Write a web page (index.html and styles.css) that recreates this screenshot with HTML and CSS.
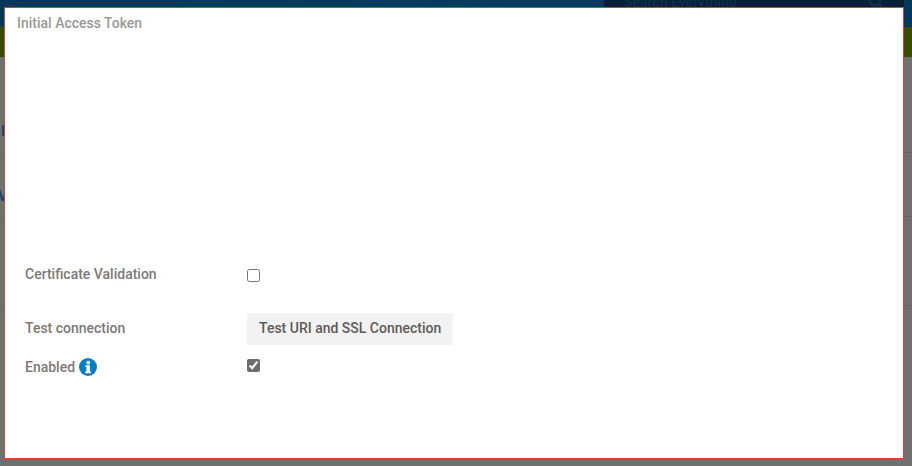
FILE: index.html
```html
<!DOCTYPE html>
<html lang="en">
	<head>
		<meta name="viewport" content="width=device-width, initial-scale=1" />
		<title>Initial Access Token</title>
		<link rel="stylesheet" href="styles.css">
	</head>
	<body>
		<div class="page">
			<header class="topbar">
				<div class="search">
					<span class="search-text">Search Everything</span>
					<svg class="search-icon" width="20" height="20" viewBox="0 0 20 20">
						<circle cx="8" cy="0" r="5.5" fill="none" stroke="#0f2f4c" stroke-width="2.4" />
						<path d="M12 4l4 4" stroke="#0f2f4c" stroke-width="2.6" />
					</svg>
				</div>
			</header>
			<div class="greenbar"></div>
			<div class="backdrop">
				<div class="back-row back-row-one"><span class="back-letter letter-one">I</span></div>
				<div class="back-row back-row-two"><span class="back-letter">V</span></div>
				<div class="back-row back-row-three"></div>
			</div>
		</div>

		<div class="modal">
			<h3 class="modal-title">Initial Access Token</h3>
			<div class="form">
				<div class="form-row row-cert">
					<label class="form-label" for="certValidation">Certificate Validation</label>
					<input class="check" id="certValidation" type="checkbox" />
				</div>
				<div class="form-row row-test">
					<span class="form-label">Test connection</span>
					<button class="btn" type="button">Test URI and SSL Connection</button>
				</div>
				<div class="form-row row-enabled">
					<label class="form-label" for="enabled">Enabled
						<svg class="info" width="18" height="18" viewBox="0 0 18 18">
							<circle cx="9" cy="9" r="9" fill="#0a7fbd" />
							<circle cx="9.2" cy="4.6" r="1.9" fill="#fff" />
							<path d="M6.4 7.3h4.5v6.2h1.2v1.7H6.2v-1.7h1.3V9H6.4z" fill="#fff" />
						</svg>
					</label>
					<input class="check" id="enabled" type="checkbox" checked />
				</div>
			</div>
		</div>
	</body>
</html>
```

FILE: styles.css
```css
html, body {
	height: 100%;
}
body {
	margin: 0;
	background-color: #707070;
	font-family: Roboto, "Liberation Sans", Arial, sans-serif;
	overflow: hidden;
}
.page {
	height: 466px;
	overflow: hidden;
}
.topbar {
	height: 27px;
	display: flex;
	justify-content: flex-end;
	background: linear-gradient(90deg, #00385a, #003c60 50%, #00395c);
}
.search {
	width: 300px;
	height: 27px;
	margin-right: 8px;
	padding-left: 20px;
	box-sizing: border-box;
	display: flex;
	justify-content: space-between;
	background-color: #001f38;
	overflow: hidden;
}
.search-text {
	color: #0f2f4c;
	font-size: 14px;
	font-weight: 500;
	line-height: 4px;
}
.search-icon {
	margin-right: 17px;
}
.greenbar {
	height: 30px;
	background-color: #3a4a00;
}
.back-row {
	border-bottom: 1px solid #666;
	box-sizing: border-box;
}
.back-row-one {
	height: 96px;
	padding-top: 67px;
}
.back-row-two {
	height: 64px;
	padding-top: 36px;
}
.back-row-three {
	height: 89px;
}
.back-letter {
	color: #1f3f66;
	font-size: 14px;
	font-weight: 700;
	line-height: 14px;
	display: block;
	margin-left: -2px;
}
.letter-one {
	margin-left: 1px;
}

.modal {
	position: absolute;
	left: 4px;
	top: 7px;
	width: 900px;
	height: 453px;
	box-sizing: border-box;
	background-color: #fff;
	border: 1px solid #d9403a;
	border-bottom-width: 2px;
	padding: 7px 12px 0;
}
.modal-title {
	margin: 0;
	color: #9c9996;
	font-size: 14px;
	font-weight: 500;
	line-height: 16px;
}
.form {
	padding: 0 0 0 8px;
}
.form-row {
	display: flex;
	align-items: center;
}
.row-cert {
	margin-top: 224px;
	height: 40px;
}
.row-cert .form-label {
	padding-bottom: 2px;
}
.row-test {
	margin-top: 18px;
	height: 32px;
}
.row-test .form-label {
	padding-bottom: 2px;
}
.row-enabled {
	margin-top: 6px;
	height: 32px;
}
.row-enabled .check {
	margin-bottom: 4px;
}
.form-label {
	width: 222px;
	display: flex;
	align-items: center;
	gap: 4px;
	color: #7d7977;
	font-size: 14px;
	font-weight: 500;
}
.check {
	width: 13px;
	height: 13px;
	margin: 0;
	accent-color: #6d6d6d;
}
.btn {
	height: 32px;
	padding: 0 12px 2px;
	border: 0;
	background-color: #f2f2f2;
	color: #5f5b58;
	font-family: inherit;
	font-size: 14px;
	font-weight: 500;
}
```
